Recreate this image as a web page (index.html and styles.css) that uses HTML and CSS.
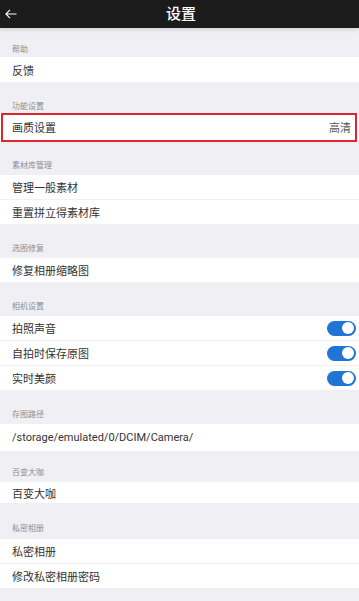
FILE: index.html
```html
<!DOCTYPE html>
<html lang="zh">
<head>
<meta charset="utf-8">
<title>设置</title>
<link rel="stylesheet" href="styles.css">
</head>
<body>
<div class="page">
  <header class="topbar">
    <svg class="back" width="12" height="10" viewBox="0 0 12 10"><path d="M11.5 5H1M5 0.8L0.9 5L5 9.2" fill="none" stroke="#fff" stroke-width="1.1"/></svg>
    <h1 class="title">设置</h1>
  </header>

  <div class="label first">帮助</div>
  <div class="group">
    <div class="row tall">反馈</div>
  </div>

  <div class="label second">功能设置</div>
  <div class="group">
    <div class="row quality highlight"><span>画质设置</span><span class="value">高清</span></div>
  </div>

  <div class="label">素材库管理</div>
  <div class="group">
    <div class="row">管理一般素材</div>
    <div class="row">重置拼立得素材库</div>
  </div>

  <div class="label">选图修复</div>
  <div class="group">
    <div class="row">修复相册缩略图</div>
  </div>

  <div class="label">相机设置</div>
  <div class="group">
    <div class="row"><span>拍照声音</span><span class="toggle"></span></div>
    <div class="row"><span>自拍时保存原图</span><span class="toggle"></span></div>
    <div class="row"><span>实时美颜</span><span class="toggle"></span></div>
  </div>

  <div class="label">存图路径</div>
  <div class="group">
    <div class="row path">/storage/emulated/0/DCIM/Camera/</div>
  </div>

  <div class="label short">百变大咖</div>
  <div class="group">
    <div class="row compact">百变大咖</div>
  </div>

  <div class="label roomy">私密相册</div>
  <div class="group">
    <div class="row">私密相册</div>
    <div class="row">修改私密相册密码</div>
  </div>
</div>
</body>
</html>
```

FILE: styles.css
```css
* { box-sizing: border-box; }
html, body {
  margin: 0;
  padding: 0;
  background: #efeff4;
}
body {
  font-family: Roboto, "Noto Sans CJK SC", sans-serif;
  color: #333;
}
.page {
  width: 359px;
  min-height: 601px;
  background: #efeff4;
}
.topbar {
  position: relative;
  height: 28px;
  background: #1b1b1b;
  display: flex;
  align-items: center;
  justify-content: center;
  box-shadow: 0 2px 4px rgba(0,0,0,0.12);
}
.back {
  position: absolute;
  left: 5px;
  top: 9px;
}
.title {
  margin: 0;
  font-size: 15px;
  font-weight: 500;
  color: #fff;
  line-height: 28px;
  padding-left: 3px;
}
.label {
  font-size: 8px;
  line-height: 12px;
  color: #8e8e93;
  padding: 19px 0 3px 12px;
}
.label.first { padding-top: 16px; padding-bottom: 1px; }
.label.second { padding-top: 19px; padding-bottom: 0; }
.label.short { padding-top: 16px; padding-bottom: 3px; }
.label.roomy { padding-top: 20px; padding-bottom: 4px; }
.group {
  background: #fff;
}
.row {
  height: 24px;
  display: flex;
  align-items: center;
  justify-content: space-between;
  padding: 0 3px 0 12px;
  font-size: 11px;
  color: #333;
}
.row + .row {
  border-top: 1px solid #f1f1f3;
  height: 25px;
}
.row.tall { height: 25px; }
.row.path { height: 27px; }
.row.compact { height: 21px; }
.row.quality { height: 28px; padding-right: 8px; }
.value { color: #555; }
.highlight { position: relative; }
.highlight::after {
  content: "";
  position: absolute;
  top: 0;
  bottom: -1px;
  left: 1px;
  right: 2px;
  border: 2px solid #e0262d;
}
.toggle {
  position: relative;
  width: 29px;
  height: 15px;
  border-radius: 8px;
  background: #1f74d6;
}
.toggle::after {
  content: "";
  position: absolute;
  right: 2px;
  top: 1.5px;
  width: 12px;
  height: 12px;
  border-radius: 50%;
  background: #fff;
}
```
